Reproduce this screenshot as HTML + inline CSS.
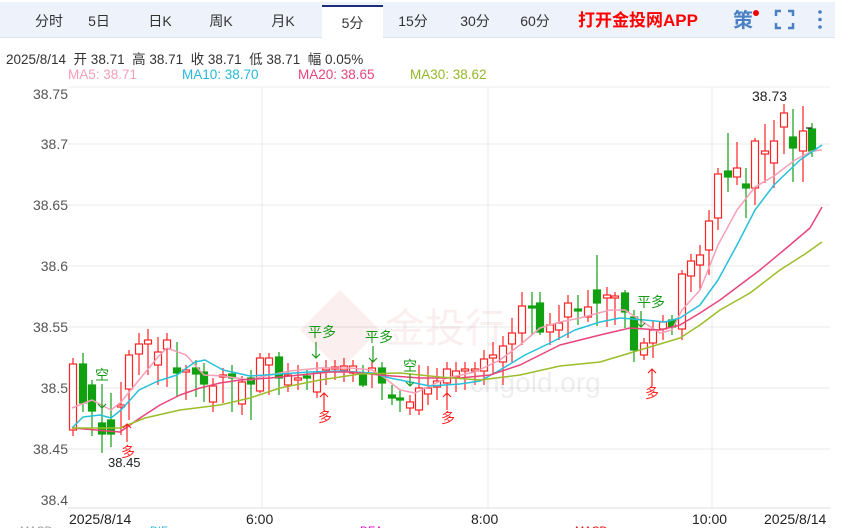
<!DOCTYPE html>
<html><head><meta charset="utf-8">
<style>
*{margin:0;padding:0;box-sizing:border-box}
body{width:843px;height:528px;overflow:hidden;background:#fff;font-family:"Liberation Sans","Noto Sans CJK SC",sans-serif;position:relative}
.bar{position:absolute;left:0;top:2px;width:835px;height:36px;background:#eef3fb;border-bottom:1px solid #d9e3f1}
.tab{position:absolute;top:0;height:36px;line-height:38px;font-size:14px;color:#333;text-align:center}
.act{background:#fff;border-top:2px solid #1b2d7c;top:3px;height:34px;line-height:33px}
.app{position:absolute;left:578px;top:0;line-height:38px;font-size:17px;font-weight:bold;color:#f00}
.ce{position:absolute;left:733px;top:0;line-height:38px;font-size:20px;color:#4a7fc4;font-weight:bold}
.dot{position:absolute;left:753px;top:8px;width:6px;height:6px;border-radius:50%;background:#e00}
.info{position:absolute;left:6px;top:48px;font-size:13.5px;color:#333;white-space:nowrap}
.ma{position:absolute;top:67px;font-size:13.5px;white-space:nowrap}
svg{position:absolute;left:0;top:0}
</style></head><body>
<div class="bar">
<div class="tab" style="left:24px;width:50px">分时</div>
<div class="tab" style="left:84px;width:30px">5日</div>
<div class="tab" style="left:144px;width:32px">日K</div>
<div class="tab" style="left:204px;width:34px">周K</div>
<div class="tab" style="left:266px;width:34px">月K</div>
<div class="tab act" style="left:322px;width:61px">5分</div>
<div class="tab" style="left:393px;width:40px">15分</div>
<div class="tab" style="left:455px;width:40px">30分</div>
<div class="tab" style="left:515px;width:40px">60分</div>
<div class="app">打开金投网APP</div>
<div class="ce">策</div><div class="dot"></div>
</div>
<div class="info">2025/8/14&nbsp; 开 38.71&nbsp; 高 38.71&nbsp; 收 38.71&nbsp; 低 38.71&nbsp; 幅 0.05%</div>
<div class="ma" style="left:68px;color:#f4a0b8">MA5: 38.71</div>
<div class="ma" style="left:182px;color:#26b8d8">MA10: 38.70</div>
<div class="ma" style="left:298px;color:#e8457a">MA20: 38.65</div>
<div class="ma" style="left:410px;color:#94b82a">MA30: 38.62</div>
<svg width="843" height="528" id="s" font-family="Liberation Sans, Noto Sans CJK SC, sans-serif">
<g stroke="#4a7fc4" stroke-width="2.5" fill="none">
<path d="M776 16V11h5M788 11h5v5M793 23v5h-5M781 28h-5v-5"/>
</g>
<g fill="#4a7fc4"><circle cx="820" cy="12" r="1.8"/><circle cx="820" cy="19.5" r="1.8"/><circle cx="820" cy="27" r="1.8"/></g>
<line x1="68" y1="87" x2="830" y2="87" stroke="#eee"/>
<g stroke="#e8e8e8" stroke-width="1">
<line x1="68" y1="144" x2="830" y2="144"/><line x1="68" y1="205" x2="830" y2="205"/>
<line x1="68" y1="266" x2="830" y2="266"/><line x1="68" y1="327" x2="830" y2="327"/>
<line x1="68" y1="388" x2="830" y2="388"/><line x1="68" y1="449" x2="830" y2="449"/>
<line x1="262" y1="87" x2="262" y2="508"/><line x1="488" y1="87" x2="488" y2="508"/><line x1="712" y1="87" x2="712" y2="508"/>
</g>
<line x1="68" y1="508" x2="830" y2="508" stroke="#ddd"/>
<g font-size="14" fill="#555" text-anchor="end">
<text x="68" y="99">38.75</text><text x="68" y="149">38.7</text><text x="68" y="210">38.65</text>
<text x="68" y="271">38.6</text><text x="68" y="332">38.55</text><text x="68" y="393">38.5</text>
<text x="68" y="454">38.45</text><text x="68" y="505">38.4</text>
</g>
<g font-size="14" fill="#222">
<text x="69" y="524">2025/8/14</text><text x="246" y="524">6:00</text><text x="471" y="524">8:00</text>
<text x="692" y="524">10:00</text><text x="764" y="524">2025/8/14</text>
</g>
<g opacity="0.08">
<path d="M300 330 L340 290 L380 330 L340 370Z" fill="#c33"/>
<text x="385" y="342" font-size="40" fill="#c33">金投行</text>
<text x="470" y="392" font-size="28" fill="#333">cngold.org</text>
</g>
<g id="c"></g>
<g fill="none" stroke-width="1.5" id="m"></g>
<g font-size="14">
<text x="95" y="380" fill="#1a9a1a">空</text>
<text x="121" y="457" fill="#f22">多</text>
<text x="108" y="467" fill="#222" font-size="13">38.45</text>
<text x="308" y="337" fill="#1a9a1a">平多</text>
<text x="318" y="422" fill="#f22">多</text>
<text x="365" y="342" fill="#1a9a1a">平多</text>
<text x="403" y="371" fill="#1a9a1a">空</text>
<text x="441" y="423" fill="#f22">多</text>
<text x="637" y="307" fill="#1a9a1a">平多</text>
<text x="645" y="398" fill="#f22">多</text>
<text x="752" y="101" fill="#222">38.73</text>
</g>
<g stroke-width="1.2" fill="none">
<path d="M102 384V408M98 404l4 4 4-4" stroke="#1a9a1a"/>
<path d="M127 442V424M123 428l4-4 4 4" stroke="#f22"/>
<path d="M316 342V358M312 354l4 4 4-4" stroke="#1a9a1a"/>
<path d="M324 410V393M320 397l4-4 4 4" stroke="#f22"/>
<path d="M373 346V362M369 358l4 4 4-4" stroke="#1a9a1a"/>
<path d="M410 374V386M406 382l4 4 4-4" stroke="#1a9a1a"/>
<path d="M447 410V393M443 397l4-4 4 4" stroke="#f22"/>
<path d="M641 311V327M637 323l4 4 4-4" stroke="#1a9a1a"/>
<path d="M652 386V369M648 373l4-4 4 4" stroke="#f22"/>
<path d="M806 128h6" stroke="#222"/>
</g>
<g font-size="11" fill="#999"><text x="20" y="534">MACD</text><text x="150" y="534" fill="#26b8d8">DIF</text><text x="360" y="534" fill="#d0c">DEA</text><text x="575" y="534" fill="#e00">MACD</text></g>
</svg>
<script>
var C=[[73,430,364,358,436],[83,364,403,353,412],[92,385,411,380,436],[102,423,434,407,453],[111,420,434,393,447],[121,406,405,382,435],[129,389,355,350,420],[139,354,344,333,375],[148,344,340,329,375],[158,365,352,337,385],[167,349,340,333,387],[177,368,373,342,397],[186,372,370,365,400],[196,368,374,360,397],[204,372,384,363,402],[213,402,386,378,412],[223,377,375,368,403],[232,374,378,365,412],[242,404,382,376,415],[251,378,384,370,420],[260,391,358,353,393],[269,365,358,353,395],[279,357,378,352,395],[288,385,375,363,392],[298,380,378,365,390],[307,376,378,370,390],[317,392,372,362,398],[326,369,368,360,385],[335,369,367,360,380],[344,370,366,358,382],[353,373,366,360,382],[363,375,385,365,387],[372,373,368,360,388],[382,368,383,362,400],[392,395,398,385,405],[400,398,399,390,412],[410,408,402,395,415],[419,410,388,365,415],[428,394,388,366,405],[437,387,381,368,400],[447,383,369,362,396],[456,377,371,362,392],[465,370,369,362,390],[475,370,369,362,385],[484,371,359,350,385],[493,358,355,342,375],[503,362,346,336,385],[512,344,333,318,362],[522,333,306,292,345],[532,306,307,292,335],[540,303,332,292,335],[550,332,325,313,345],[559,330,323,305,340],[568,317,303,295,338],[578,309,310,295,325],[588,317,307,290,322],[597,290,303,255,326],[607,298,295,287,327],[615,298,296,292,325],[625,293,312,290,328],[634,317,350,310,362],[644,355,343,338,360],[653,343,330,320,358],[663,329,322,315,340],[672,320,327,315,335],[682,329,274,270,340],[691,276,261,254,292],[700,265,255,245,290],[709,250,221,210,275],[718,218,174,168,230],[728,171,177,133,192],[737,177,168,142,185],[746,184,188,168,218],[755,188,141,138,205],[765,154,151,124,183],[774,163,141,120,188],[784,127,113,104,154],[793,137,148,109,182],[803,151,131,106,182],[812,129,151,123,157]];
var h='';C.forEach(function(k){var x=k[0],o=k[1],c=k[2],up=c<o,col=up?'#f22':'#11a011';
h+='<line x1="'+x+'" y1="'+k[3]+'" x2="'+x+'" y2="'+k[4]+'" stroke="'+col+'" stroke-width="1.2"/>';
var t=Math.min(o,c),b=Math.max(o,c);if(b-t<2){b=t+2}
h+='<rect x="'+(x-3.5)+'" y="'+t+'" width="7" height="'+(b-t)+'" fill="'+(up?'#fff':col)+'" stroke="'+col+'" stroke-width="1.2"/>'});
document.getElementById('c').innerHTML=h;
var M={'#f4a0b8':'72,408 92,400 111,410 121,402 139,380 158,357 167,348 186,355 204,375 223,376 251,380 260,377 290,371 320,368 350,368 372,370 385,378 400,390 415,393 430,386 447,378 475,372 500,360 520,345 540,328 560,322 580,318 610,310 625,310 640,320 660,333 672,330 682,310 700,290 718,245 737,210 755,187 774,176 795,160 812,151 822,150',
'#26c0dc':'72,428 83,417 100,415 111,418 121,410 139,390 158,381 177,375 195,362 205,360 223,370 250,376 280,374 310,372 340,371 372,373 390,378 410,382 430,386 460,384 480,381 500,370 525,355 550,343 575,330 600,322 620,318 645,320 665,322 680,318 700,305 718,280 737,245 755,210 774,185 800,160 822,145',
'#e8457a':'72,428 120,432 140,418 160,405 180,395 200,388 220,383 240,380 270,378 300,375 330,372 350,372 380,375 420,378 460,378 490,375 520,365 560,345 600,335 630,328 660,330 680,325 700,313 720,300 740,285 760,270 790,245 810,228 822,207',
'#9cbd2a':'72,428 120,428 145,418 180,410 220,405 250,398 280,388 320,380 360,374 400,373 440,377 480,380 520,375 560,366 600,362 640,350 680,338 700,325 720,310 750,293 780,270 805,254 822,242'};
var g='';for(var k in M){g+='<polyline points="'+M[k]+'" stroke="'+k+'" stroke-linejoin="round"/>'}
document.getElementById('m').innerHTML=g;
</script>
</body></html>
